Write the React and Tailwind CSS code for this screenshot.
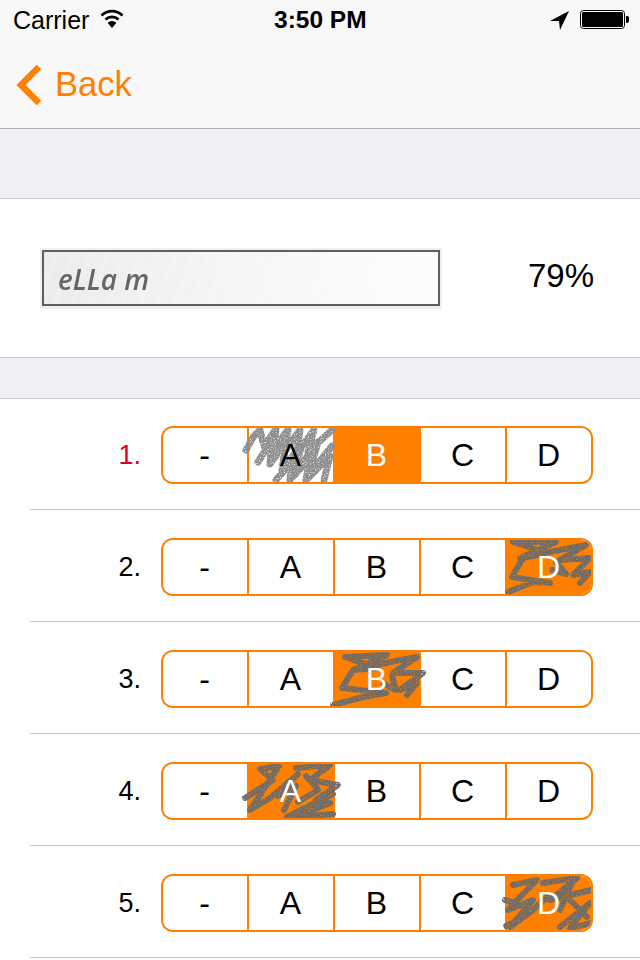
import React from "react";

const SCRIBBLES = {
  r1: "M-2 24 L6 10 L12 4 L16 20 L28 3 L26 22 L40 4 L36 26 L52 4 L48 28 L66 4 L60 26 L84 4 M10 36 L24 14 L22 38 L38 16 L34 44 L54 18 L46 48 L70 16 L60 50 L84 20 M28 54 L44 36 L42 54 L62 32 L58 54 L82 30 L76 54",
  r2: "M2 54 L27 44 L44 45 L6 39 L17 20 L40 15 L7 4 L27 4 L50 4 L14 20 L54 12 L80 7 L54 22 L84 20 L67 37 L84 34 L74 45 M50 24 L60 36 L46 32",
  r3: "M-1 55 L29 47 L52 43 L8 38 L19 20 L43 18 L11 7 L53 5 L19 20 L56 12 L83 7 L59 23 L89 23 L66 40 L83 33 L73 45 M58 26 L62 40 L50 34",
  r4: "M-3 36 L25 18 L12 7 L31 4 L2 48 L22 36 L50 12 L30 34 L48 24 L36 48 M48 6 L82 3 L62 18 L90 23 L68 38 L85 32 L39 55 L59 45 L82 41 L48 55 L85 52 M58 14 L70 28 L50 40",
  r5: "M7 11 L31 6 L14 23 L2 36 L27 26 L4 53 L27 36 L41 23 M37 9 L71 4 L44 26 L85 16 M54 53 L84 29 L64 54 L86 49 M57 19 L81 43 M67 6 L54 36 M-1 26 L6 28 M0 52 L4 50",
};

function Scribble({ d, onOrange }) {
  return (
    <svg viewBox="0 0 88 58" className="absolute left-[-1px] top-[-2px] w-[88px] h-[58px] overflow-visible pointer-events-none">
      <path
        d={d}
        fill="none"
        stroke={onOrange ? "#6e6c6a" : "#8e8e8e"}
        strokeWidth={onOrange ? 6 : 7}
        strokeLinecap="round"
        strokeLinejoin="round"
        filter="url(#grain)"
      />
    </svg>
  );
}

function Segment({ selected, mark, scribble }) {
  const labels = ["-", "A", "B", "C", "D"];
  return (
    <div className="relative flex w-[432px] h-[58px] border-2 border-[#ff8000] rounded-[12px] overflow-hidden">
      {labels.map((l, i) => {
        const isSel = selected === i;
        const hasMark = mark === i;
        return (
          <div
            key={l}
            className={`relative h-full flex items-center justify-center ${hasMark ? "z-10" : ""} ${i < 4 ? "w-[86px] border-r-2 border-[#ff8000]" : "w-[84px]"} ${isSel ? "bg-[#ff8000] text-white" : "bg-white text-black"}`}
          >
            {hasMark && <Scribble d={scribble} onOrange={isSel} />}
            <span className="relative -ml-[1px] text-[32px] leading-none">{l}</span>
          </div>
        );
      })}
    </div>
  );
}

const ROWS = [
  { n: "1.", red: true, selected: 2, mark: 1, s: SCRIBBLES.r1, first: true },
  { n: "2.", selected: 4, mark: 4, s: SCRIBBLES.r2 },
  { n: "3.", selected: 2, mark: 2, s: SCRIBBLES.r3 },
  { n: "4.", selected: 1, mark: 1, s: SCRIBBLES.r4 },
  { n: "5.", selected: 4, mark: 4, s: SCRIBBLES.r5 },
];

function Row({ n, red, selected, mark, s, first }) {
  return (
    <div className={`ml-[30px] border-b border-[#c8c7cc] flex items-start ${first ? "h-[111px] pt-[27px]" : "h-[112px] pt-[28px]"}`}>
      <div className={`w-[111px] h-[58px] flex items-center justify-end text-[27px] ${red ? "text-[#e0001b]" : "text-black"}`}>{n}</div>
      <div className="ml-[20px]">
        <Segment selected={selected} mark={mark} scribble={s} />
      </div>
    </div>
  );
}

export default function App() {
  return (
    <div className="w-[640px] h-[960px] overflow-hidden bg-white" style={{ fontFamily: '"Liberation Sans", Arial, sans-serif' }}>
      <svg width="0" height="0" className="absolute">
        <defs>
          <filter id="grain" x="-20%" y="-20%" width="140%" height="140%">
            <feGaussianBlur in="SourceGraphic" stdDeviation="0.6" result="soft" />
            <feTurbulence type="fractalNoise" baseFrequency="0.8" numOctaves="2" seed="3" result="noise" />
            <feColorMatrix in="noise" type="matrix" values="0 0 0 0 0  0 0 0 0 0  0 0 0 0 0  0 0 0 3 -0.4" result="mask" />
            <feComposite in="soft" in2="mask" operator="in" />
          </filter>
        </defs>
      </svg>

      <header className="h-[129px] bg-[#f8f8f8] border-b border-[#b2b2b2]">
        <div className="h-[40px] flex items-center justify-between relative pl-[13px] pr-[11px] text-black">
          <div className="flex items-center gap-[11px]">
            <span className="text-[25px] leading-none">Carrier</span>
            <svg width="24" height="19" viewBox="0 0 24 19" className="mt-[-3px]">
              <path d="M1.5 6.5 A15 15 0 0 1 22.5 6.5" fill="none" stroke="#000" strokeWidth="2.8" />
              <path d="M5.5 10.5 A9.5 9.5 0 0 1 18.5 10.5" fill="none" stroke="#000" strokeWidth="2.8" />
              <path d="M12 19 L7.6 13.8 A6.5 6.5 0 0 1 16.4 13.8 Z" fill="#000" />
            </svg>
          </div>
          <span className="absolute left-[274px] text-[24.5px] font-bold leading-none">3:50 PM</span>
          <div className="flex items-center gap-[11px]">
            <svg width="19" height="19" viewBox="0 0 19 19">
              <path d="M0 10 L19 0 L10 19 L9 10 Z" fill="#000" />
            </svg>
            <svg width="49" height="20" viewBox="0 0 49 20">
              <rect x="0.5" y="0.5" width="44" height="18" rx="3" fill="none" stroke="#000" />
              <rect x="2" y="2" width="41" height="15" rx="1.5" fill="#000" />
              <path d="M46 6 h1 a2 2 0 0 1 2 2 v3 a2 2 0 0 1 -2 2 h-1 Z" fill="#000" />
            </svg>
          </div>
        </div>
        <div className="h-[88px] flex items-center pl-[14px]">
          <svg width="30" height="42" viewBox="0 0 30 42" className="mt-[1px]">
            <path d="M25 3 L7 21 L25 39" fill="none" stroke="#ff8000" strokeWidth="6.5" />
          </svg>
          <span className="ml-[11px] mt-[1px] text-[34.5px] leading-none text-[#ff8000]">Back</span>
        </div>
      </header>

      <div className="h-[70px] bg-[#efeff4] border-b border-[#c8c7cc]" />

      <section className="h-[159px] border-b border-[#c8c7cc] flex items-center justify-between pl-[40px] pr-[46px]">
        <div className="w-[402px] h-[61px] bg-[#f0f0f0] pt-[2px] pb-[3px] px-[2px] mt-[1px]">
          <div className="w-full h-full border-2 border-[#5f5f5f] flex items-center pl-[14px] bg-[repeating-linear-gradient(110deg,#ffffff00_0px,#ffffff00_9px,#ffffff33_12px,#ffffff00_16px),linear-gradient(90deg,#ececec,#f6f6f6_50%,#fdfdfd)]">
            <span className="text-[#666] text-[28px] italic font-semibold leading-none blur-[0.6px] mt-[2px]" style={{ fontFamily: '"Open Sans", sans-serif' }}>
              eLLa m
            </span>
          </div>
        </div>
        <span className="text-[33px] leading-none text-black mt-[-6px]">79%</span>
      </section>

      <div className="h-[41px] bg-[#efeff4] border-b border-[#c8c7cc]" />

      <div>
        {ROWS.map((r) => (
          <Row key={r.n} {...r} />
        ))}
      </div>
    </div>
  );
}
